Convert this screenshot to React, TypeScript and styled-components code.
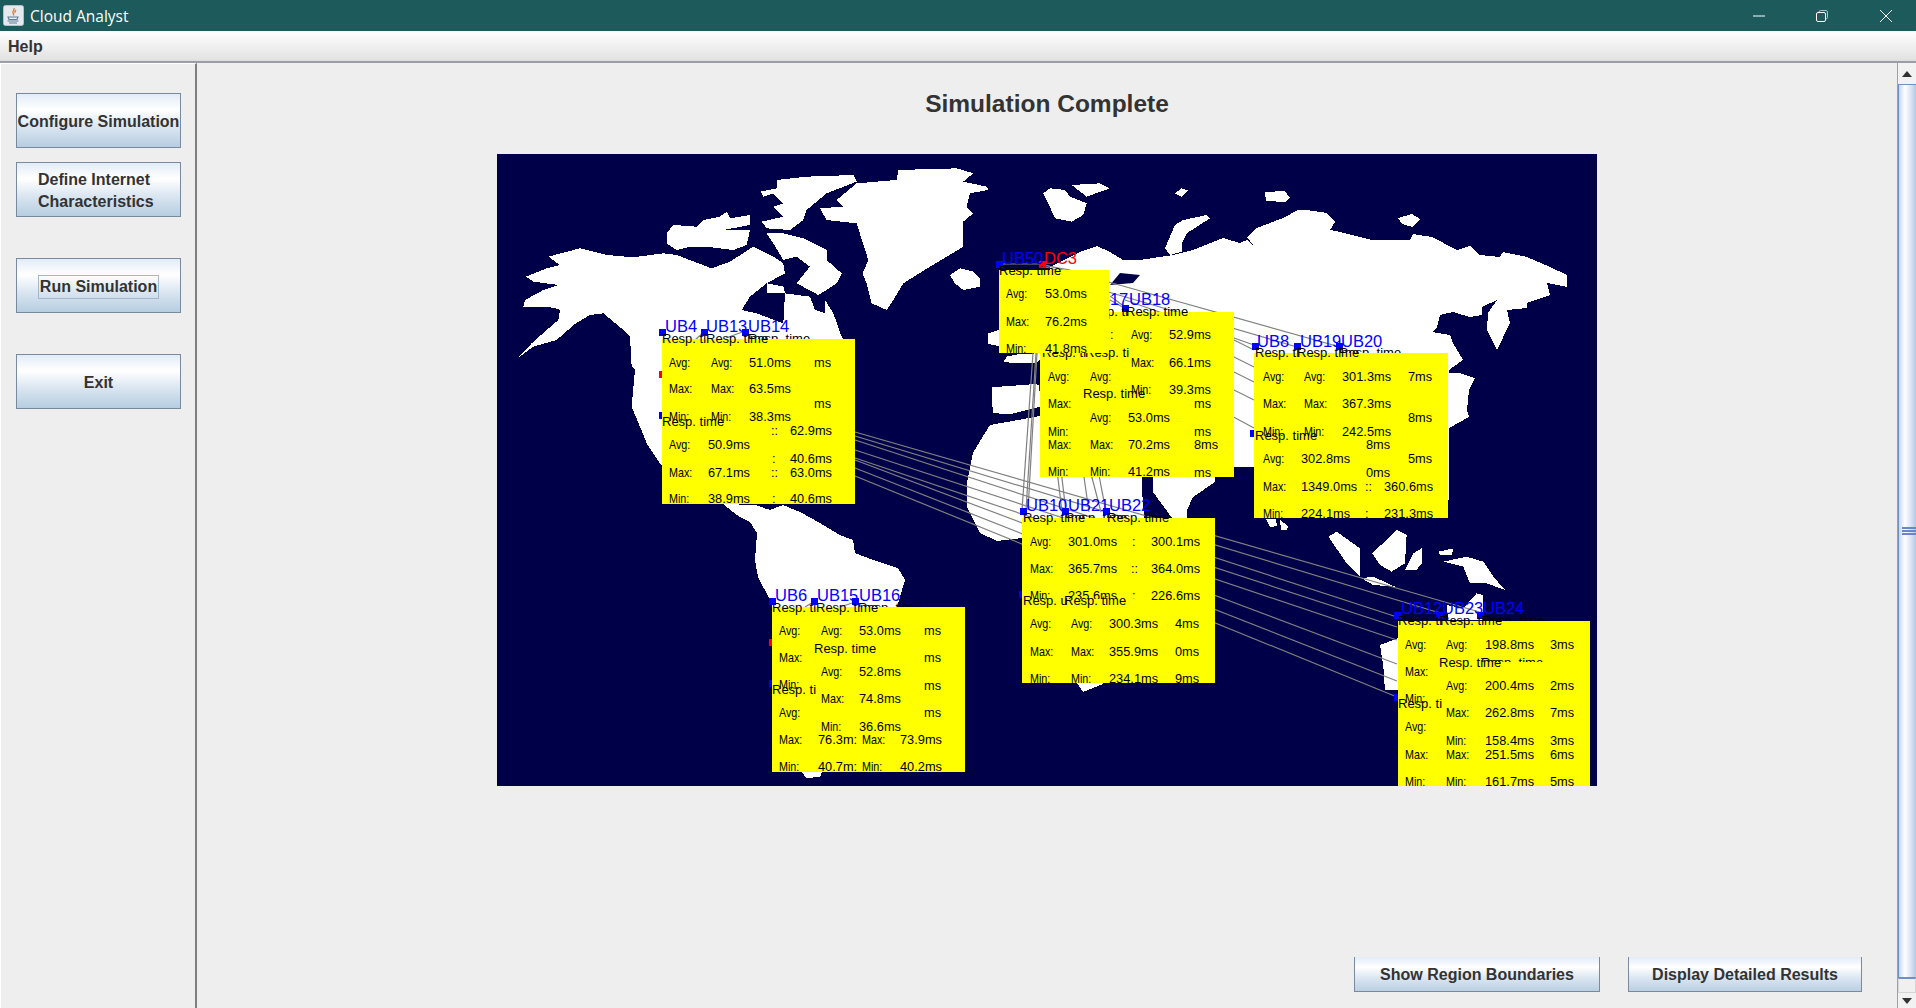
import React from "react";
import styled, { createGlobalStyle } from "styled-components";

const MAP_X = 497;
const MAP_Y = 154;

const GlobalStyle = createGlobalStyle`
  html, body {
    margin: 0;
    padding: 0;
    height: 100%;
    overflow: hidden;
    background: #eeeeee;
    font-family: "Liberation Sans", Arial, sans-serif;
  }
`;

const Frame = styled.div`
  width: 1916px;
  height: 1008px;
  display: flex;
  flex-direction: column;
  overflow: hidden;
`;

const TitleBar = styled.div`
  height: 31px;
  flex: none;
  background: #1c5a5c;
  color: #ffffff;
  display: flex;
  align-items: center;
  padding-left: 3px;
  font-family: "Open Sans", "Noto Sans", sans-serif;
  font-size: 15.5px;
`;

const AppName = styled.span`
  margin-left: 6px;
  flex: 1;
`;

const WindowButton = styled.button`
  width: 12px;
  height: 12px;
  padding: 0;
  border: 0;
  background: none;
  margin-right: ${(p: { $gap: number }) => p.$gap}px;
  display: block;
`;

const MenuBar = styled.div`
  height: 30px;
  flex: none;
  box-sizing: border-box;
  padding: 2px 0 0 8px;
  background: linear-gradient(#ffffff, #e2e2e2);
  display: flex;
  align-items: center;
  font-size: 16px;
  font-weight: 700;
  color: #333333;
  border-bottom: 1px solid #dddddd;
`;

const Body = styled.div`
  flex: 1;
  display: flex;
  min-height: 0;
  border-top: 2px solid #9a9ea6;
`;

const SidePanel = styled.aside`
  width: 197px;
  flex: none;
  box-sizing: border-box;
  padding: 29px 0 0 15px;
  background: #eeeeee;
  border-left: 1px solid #ffffff;
  border-top: 1px solid #ffffff;
  border-right: 2px solid #808080;
  display: flex;
  flex-direction: column;
  align-items: flex-start;
`;

const MetalButton = styled.button<{ $top?: number; $left?: boolean }>`
  width: 165px;
  height: 55px;
  flex: none;
  margin: ${(p) => p.$top ?? 0}px 0 0 0;
  padding: 2px 0 0 ${(p) => (p.$left ? "21px" : "0")};
  box-sizing: border-box;
  border: 1px solid #7a8a9e;
  background: linear-gradient(#e2ecf7 0%, #ffffff 30%, #dbe6f1 62%, #b6cde1 100%);
  color: #333333;
  font-family: "Liberation Sans", Arial, sans-serif;
  font-size: 16px;
  font-weight: 700;
  line-height: 22px;
  white-space: nowrap;
  overflow: hidden;
  text-align: ${(p) => (p.$left ? "left" : "center")};
`;

const FocusLabel = styled.span`
  display: inline-block;
  border: 1px solid #a3b8cc;
  padding: 0 1px;
  line-height: 22px;
`;

const Content = styled.main`
  flex: 1;
  display: flex;
  flex-direction: column;
  align-items: center;
  min-width: 0;
`;

const Heading = styled.h1`
  margin: 0;
  padding-top: 27px;
  height: 91px;
  box-sizing: border-box;
  line-height: 28px;
  font-size: 24.5px;
  font-weight: 700;
  color: #333333;
  text-align: center;
  flex: none;
`;

const MapCanvas = styled.div`
  position: relative;
  width: 1100px;
  height: 632px;
  flex: none;
  background: #000048;
  overflow: hidden;
`;

const MapDrawing = styled.svg`
  position: absolute;
  inset: 0;
  display: block;
`;

const Pin = styled.span<{ $x: number; $y: number; $c: string }>`
  position: absolute;
  left: ${(p) => p.$x - MAP_X}px;
  top: ${(p) => p.$y - MAP_Y}px;
  width: 7px;
  height: 7px;
  background: ${(p) => p.$c};
`;

const PinLabel = styled.span<{ $x: number; $y: number; $c: string }>`
  position: absolute;
  left: ${(p) => p.$x - MAP_X}px;
  top: ${(p) => p.$y - MAP_Y - 10}px;
  line-height: 20px;
  font-size: 16.5px;
  color: ${(p) => p.$c};
  white-space: nowrap;
`;

const Sheet = styled.div<{ $x: number; $y: number; $w: number; $h: number }>`
  position: absolute;
  left: ${(p) => p.$x - MAP_X}px;
  top: ${(p) => p.$y - MAP_Y}px;
  width: ${(p) => p.$w}px;
  height: ${(p) => p.$h}px;
  background: #ffff00;
  overflow: hidden;
`;

const Stat = styled.span<{ $x: number; $y: number; $label: boolean; $clip?: number }>`
  position: absolute;
  left: ${(p) => p.$x}px;
  top: ${(p) => p.$y - 7}px;
  line-height: 14px;
  height: ${(p) => (p.$clip ? `${p.$clip}px` : "14px")};
  overflow: hidden;
  font-size: 12.8px;
  transform: ${(p) => (p.$label ? "scaleX(0.84)" : "none")};
  transform-origin: left center;
  color: #000000;
  white-space: nowrap;
`;

const CardTitle = styled.span<{ $x: number; $y: number; $clip?: number }>`
  position: absolute;
  left: ${(p) => p.$x - MAP_X}px;
  top: ${(p) => p.$y - MAP_Y - 8}px;
  line-height: 16px;
  height: ${(p) => (p.$clip ? `${p.$clip}px` : "16px")};
  overflow: hidden;
  font-size: 13px;
  color: #000000;
  white-space: nowrap;
`;

const BottomBar = styled.div`
  margin-top: auto;
  align-self: stretch;
  display: flex;
  justify-content: flex-end;
  gap: 28px;
  padding: 0 35px 16px 0;
`;

const FooterButton = styled.button<{ $w: number }>`
  width: ${(p) => p.$w}px;
  height: 35px;
  padding: 2px 0 0 0;
  box-sizing: border-box;
  border: 1px solid #7a8a9e;
  border-top: 0;
  background: linear-gradient(#e2ecf7 0%, #ffffff 30%, #dbe6f1 62%, #b9cfe3 100%);
  color: #333333;
  font-family: "Liberation Sans", Arial, sans-serif;
  font-size: 16px;
  font-weight: 700;
`;

const ScrollBar = styled.div`
  width: 19px;
  flex: none;
  display: flex;
  flex-direction: column;
  box-sizing: border-box;
  border-left: 1px solid #a0a0a0;
  background: #f0f0f0;
`;

const ScrollArrow = styled.div<{ $h: number }>`
  height: ${(p) => p.$h}px;
  flex: none;
  display: flex;
  align-items: center;
  justify-content: center;
  background: #f2f2f2;
`;

const ScrollThumb = styled.div`
  flex: 1;
  display: flex;
  flex-direction: column;
  align-items: flex-end;
  justify-content: center;
  gap: 1px;
  border: 1px solid #6f8fc9;
  border-right: 0;
  background: linear-gradient(90deg, #c5d7ee, #ffffff 35%, #d8e4f3 70%, #b3c9e4);
`;

const Grip = styled.i`
  display: block;
  width: 14px;
  height: 2px;
  background: #6a86c8;
`;

const ScrollTrack = styled.div`
  height: 15px;
  flex: none;
  border: 1px solid #d5d5d5;
  border-top: 1px solid #6f8fc9;
  box-sizing: border-box;
`;

type Txt = [string, number, number, number?];

type Group = {
  pins: [number, number, string][];
  labels: [string, number, number, string][];
  rect: [number, number, number, number];
  under: Txt[];
  body: Txt[];
};

const BLUE = "#0000ff";
const RED = "#ff0000";

const europe: Group = {
  pins: [
    [1039, 384, BLUE],
    [1080, 305, BLUE],
    [1122, 305, BLUE],
  ],
  labels: [
    ["UB17", 1087, 299, BLUE],
    ["UB18", 1129, 299, BLUE],
  ],
  rect: [1040, 312, 194, 165],
  under: [],
  body: [
    ["Resp. ti", 1084, 312],
    ["Resp. time", 1126, 312],
    [":", 1110, 335],
    ["Avg:", 1131, 335],
    ["52.9ms", 1169, 335],
    ["Resp. ti", 1042, 353],
    ["Resp. ti", 1085, 353],
    ["Max:", 1131, 363],
    ["66.1ms", 1169, 363],
    ["Avg:", 1048, 377],
    ["Avg:", 1090, 377],
    ["Min:", 1131, 390],
    ["39.3ms", 1169, 390],
    ["Resp. time", 1083, 394],
    ["Max:", 1048, 404],
    ["ms", 1194, 404],
    ["Avg:", 1090, 418],
    ["53.0ms", 1128, 418],
    ["Min:", 1048, 432],
    ["ms", 1194, 432],
    ["Max:", 1048, 445],
    ["Max:", 1090, 445],
    ["70.2ms", 1128, 445],
    ["8ms", 1194, 445],
    ["Min:", 1048, 472],
    ["Min:", 1090, 472],
    ["41.2ms", 1128, 472],
    ["ms", 1194, 473],
  ],
};

const dc3: Group = {
  pins: [
    [996, 261, BLUE],
    [1039, 261, RED],
  ],
  labels: [
    ["UB50", 1002, 258, BLUE],
    ["DC3", 1044, 258, RED],
  ],
  rect: [999, 270, 110, 83],
  under: [],
  body: [
    ["Resp. time", 999, 271],
    ["Avg:", 1006, 294],
    ["53.0ms", 1045, 294],
    ["Max:", 1006, 322],
    ["76.2ms", 1045, 322],
    ["Min:", 1006, 349],
    ["41.8ms", 1045, 349],
  ],
};

const northAmerica: Group = {
  pins: [
    [659, 329, BLUE],
    [701, 329, BLUE],
    [742, 329, BLUE],
    [659, 371, RED],
    [659, 412, BLUE],
  ],
  labels: [
    ["UB4", 665, 326, BLUE],
    ["UB13", 706, 326, BLUE],
    ["UB14", 748, 326, BLUE],
  ],
  rect: [662, 339, 193, 165],
  under: [["Resp. time", 748, 339]],
  body: [
    ["Resp. ti", 662, 339],
    ["Resp. time", 706, 339],
    ["Avg:", 669, 363],
    ["Avg:", 711, 363],
    ["51.0ms", 749, 363],
    ["ms", 814, 363],
    ["Max:", 669, 389],
    ["Max:", 711, 389],
    ["63.5ms", 749, 389],
    ["ms", 814, 404],
    ["Min:", 669, 417],
    ["Min:", 711, 417],
    ["38.3ms", 749, 417],
    ["Resp. time", 662, 422],
    ["::", 771, 431],
    ["62.9ms", 790, 431],
    ["Avg:", 669, 445],
    ["50.9ms", 708, 445],
    [":", 772, 459],
    ["40.6ms", 790, 459],
    ["Max:", 669, 473],
    ["67.1ms", 708, 473],
    ["::", 771, 473],
    ["63.0ms", 790, 473],
    ["Min:", 669, 499],
    ["38.9ms", 708, 499],
    [":", 772, 499],
    ["40.6ms", 790, 499],
  ],
};

const asia: Group = {
  pins: [
    [1252, 343, BLUE],
    [1294, 343, BLUE],
    [1336, 343, BLUE],
    [1250, 430, BLUE],
  ],
  labels: [
    ["UB8", 1257, 341, BLUE],
    ["UB19", 1300, 341, BLUE],
    ["UB20", 1341, 341, BLUE],
  ],
  rect: [1254, 353, 194, 165],
  under: [["Resp. time", 1339, 353]],
  body: [
    ["Resp. ti", 1255, 353],
    ["Resp. time", 1297, 353],
    ["Avg:", 1263, 377],
    ["Avg:", 1304, 377],
    ["301.3ms", 1342, 377],
    ["7ms", 1408, 377],
    ["Max:", 1263, 404],
    ["Max:", 1304, 404],
    ["367.3ms", 1342, 404],
    ["8ms", 1408, 418],
    ["Min:", 1263, 432],
    ["Min:", 1304, 432],
    ["242.5ms", 1342, 432],
    ["Resp. time", 1255, 436],
    ["8ms", 1366, 445],
    ["Avg:", 1263, 459],
    ["302.8ms", 1301, 459],
    ["5ms", 1408, 459],
    ["0ms", 1366, 473],
    ["Max:", 1263, 487],
    ["1349.0ms", 1301, 487],
    ["::", 1365, 487],
    ["360.6ms", 1384, 487],
    ["Min:", 1263, 514],
    ["224.1ms", 1301, 514],
    [":", 1365, 514],
    ["231.3ms", 1384, 514],
  ],
};

const southAmerica: Group = {
  pins: [
    [769, 598, BLUE],
    [811, 598, BLUE],
    [852, 598, BLUE],
    [769, 639, RED],
    [769, 680, BLUE],
  ],
  labels: [
    ["UB6", 775, 595, BLUE],
    ["UB15", 817, 595, BLUE],
    ["UB16", 859, 595, BLUE],
  ],
  rect: [772, 607, 193, 165],
  under: [["Resp. time", 858, 608]],
  body: [
    ["Resp. ti", 772, 608],
    ["Resp. time", 816, 608],
    ["Avg:", 779, 631],
    ["Avg:", 821, 631],
    ["53.0ms", 859, 631],
    ["ms", 924, 631],
    ["Resp. time", 814, 649],
    ["Max:", 779, 658],
    ["ms", 924, 658],
    ["Avg:", 821, 672],
    ["52.8ms", 859, 672],
    ["Min:", 779, 685],
    ["ms", 924, 686],
    ["Resp. ti", 772, 690],
    ["Max:", 821, 699],
    ["74.8ms", 859, 699],
    ["Avg:", 779, 713],
    ["ms", 924, 713],
    ["Min:", 821, 727],
    ["36.6ms", 859, 727],
    ["Max:", 779, 740],
    ["76.3m:", 818, 740],
    ["Max:", 862, 740],
    ["73.9ms", 900, 740],
    ["Min:", 779, 767],
    ["40.7m:", 818, 767],
    ["Min:", 862, 767],
    ["40.2ms", 900, 767],
  ],
};

const africa: Group = {
  pins: [
    [1020, 508, BLUE],
    [1062, 508, BLUE],
    [1103, 508, BLUE],
    [1019, 591, BLUE],
  ],
  labels: [
    ["UB10", 1026, 505, BLUE],
    ["UB21", 1068, 505, BLUE],
    ["UB22", 1109, 505, BLUE],
  ],
  rect: [1022, 518, 193, 165],
  under: [["Resp. time", 1065, 518]],
  body: [
    ["Resp. time", 1023, 518],
    ["Resp. time", 1107, 518],
    ["Avg:", 1030, 542],
    ["301.0ms", 1068, 542],
    [":", 1132, 542],
    ["300.1ms", 1151, 542],
    ["Max:", 1030, 569],
    ["365.7ms", 1068, 569],
    ["::", 1131, 569],
    ["364.0ms", 1151, 569],
    ["Min:", 1030, 596, 10],
    ["235.6ms", 1068, 596, 10],
    [":", 1132, 596, 10],
    ["226.6ms", 1151, 596, 11],
    ["Resp. u", 1023, 601],
    ["Resp. time", 1064, 601],
    ["Avg:", 1030, 624],
    ["Avg:", 1071, 624],
    ["300.3ms", 1109, 624],
    ["4ms", 1175, 624],
    ["Max:", 1030, 652],
    ["Max:", 1071, 652],
    ["355.9ms", 1109, 652],
    ["0ms", 1175, 652],
    ["Min:", 1030, 679],
    ["Min:", 1071, 679],
    ["234.1ms", 1109, 679],
    ["9ms", 1175, 679],
  ],
};

const australia: Group = {
  pins: [
    [1394, 612, BLUE],
    [1436, 612, BLUE],
    [1477, 612, BLUE],
    [1394, 694, BLUE],
  ],
  labels: [
    ["UB12", 1401, 608, BLUE],
    ["UB23", 1442, 608, BLUE],
    ["UB24", 1483, 608, BLUE],
  ],
  rect: [1398, 621, 192, 165],
  under: [["Resp. time", 1482, 621]],
  body: [
    ["Resp. ti", 1398, 621],
    ["Resp. time", 1440, 621],
    ["Avg:", 1405, 645],
    ["Avg:", 1446, 645],
    ["198.8ms", 1485, 645],
    ["3ms", 1550, 645],
    ["Resp. time", 1439, 663],
    ["Resp. time", 1481, 663, 7],
    ["Max:", 1405, 672],
    ["Avg:", 1446, 686],
    ["200.4ms", 1485, 686],
    ["2ms", 1550, 686],
    ["Min:", 1405, 699],
    ["Resp. ti", 1398, 704],
    ["Max:", 1446, 713],
    ["262.8ms", 1485, 713],
    ["7ms", 1550, 713],
    ["Avg:", 1405, 727],
    ["Min:", 1446, 741],
    ["158.4ms", 1485, 741],
    ["3ms", 1550, 741],
    ["Max:", 1405, 755],
    ["Max:", 1446, 755],
    ["251.5ms", 1485, 755],
    ["6ms", 1550, 755],
    ["Min:", 1405, 782],
    ["Min:", 1446, 782],
    ["161.7ms", 1485, 782],
    ["5ms", 1550, 782],
  ],
};

// paint order matters, later cards sit on top of earlier ones
const groups = [europe, dc3, northAmerica, asia, southAmerica, africa, australia];

const lines: [number, number, number, number][] = [
  [855, 432, 1483, 613],
  [855, 436, 1440, 613],
  [855, 440, 1397, 617],
  [855, 450, 1397, 627],
  [855, 458, 1397, 640],
  [855, 460, 1397, 664],
  [855, 468, 1397, 681],
  [855, 476, 1397, 697],
  [1105, 281, 1340, 347],
  [1105, 291, 1297, 347],
  [1125, 300, 1254, 345],
  [1200, 323, 1254, 350],
  [1200, 340, 1254, 367],
  [1200, 355, 1254, 382],
  [1200, 373, 1254, 400],
  [1200, 399, 1254, 428],
  [1033, 353, 1022, 510],
  [1036, 353, 1026, 510],
  [1037, 353, 1028, 510],
  [1057, 470, 1062, 512],
  [1061, 470, 1066, 512],
  [1083, 470, 1089, 512],
  [1090, 470, 1101, 512],
  [1098, 470, 1106, 512],
  [1000, 264, 1042, 264],
  [1042, 265, 1070, 270],
  [1042, 264, 1066, 271],
  [1042, 266, 1060, 271],
  [705, 331, 695, 340],
  [745, 331, 726, 338],
  [815, 601, 805, 607],
  [858, 601, 840, 607],
  [1125, 307, 1110, 296],
  [1128, 310, 1110, 300],
];

// outlines in page pixels
const pageLand = [
  "723,504 733,512 740,517 750,522 757,533 755,560 758,577 770,600 772,607 897,607 905,580 898,568 873,560 855,553 853,540 840,535 820,523 800,512 783,505 770,510 755,505",
  "802,772 822,772 820,777 806,778",
  "1040,416 1007,422 990,425 985,433 973,453 967,483 967,507 980,533 997,541 1022,538 1022,600 1077,683 1083,692 1103,684 1150,600 1142,490 1142,477 1040,477",
  "1153,477 1153,492 1172,518 1187,518 1187,510 1193,497 1215,482 1215,477",
  "1050,267 1080,252 1097,246 1110,252 1123,260 1140,260 1153,258 1173,255 1193,250 1223,238 1240,243 1247,240 1253,245 1247,237 1257,228 1283,218 1298,210 1306,210 1327,213 1335,222 1330,230 1340,232 1372,240 1410,240 1413,234 1432,237 1457,250 1470,246 1480,255 1500,257 1503,252 1527,257 1550,267 1567,275 1567,287 1547,283 1550,295 1527,303 1527,308 1507,310 1510,323 1497,350 1487,330 1488,313 1497,300 1482,307 1482,315 1470,317 1453,312 1440,315 1437,327 1432,332 1450,335 1453,343 1463,360 1449,370 1449,500 1254,500 1254,467 1234,467 1200,477 1040,477 1040,353",
  "1449,373 1459,373 1475,378 1469,390 1467,410 1469,417 1449,428",
  "1265,192 1285,191 1290,198 1285,202 1266,201",
  "1398,218 1412,214 1420,219 1413,227 1402,224",
  "1266,519 1276,519 1277,526 1270,527",
  "1280,520 1288,526 1287,530 1281,530",
];

const northAmericaLand = [
  "82,625 130,590 200,570 240,535 250,525 300,495 340,490 400,540 420,560 425,650 435,660 425,770 450,830 470,880 510,940 530,960 1095,960 1095,640 1055,560 1030,490 1005,450 1005,490 975,480 960,440 885,430 880,520 800,490 755,480 780,440 830,400 885,370 880,340 850,320 790,290 720,335 665,355 560,315 520,310 430,322 350,315 270,295 175,320 210,345 170,355 108,380 130,395 205,405 160,420 105,450 100,470 170,470 195,475 210,480 205,510 170,540 125,580",
  "1225,60 1400,55 1450,70 1420,95 1490,110 1495,120 1440,130 1430,170 1450,190 1420,215 1420,290 1320,350 1240,400 1210,450 1190,480 1145,460 1130,400 1118,370 1135,330 1100,220 1010,210 990,175 1060,170 1040,150 1100,100 1220,90",
  "1380,375 1410,355 1450,365 1470,385 1470,410 1420,420 1395,400",
  "830,250 880,250 940,265 1010,300 1010,330 1055,370 1040,400 1010,420 985,435 920,400 960,350 920,320 880,330 850,280",
  "812,125 860,115 860,90 950,80 1090,75 1100,95 1010,130 950,180 940,210 900,240 830,235 815,215 880,200 850,170 880,160 850,130 820,140",
  "530,250 550,225 620,230 640,210 690,200 710,185 720,205 780,195 780,225 700,240 780,240 770,285 730,300 650,290 600,290 560,300 530,280",
  "830,400 880,410 885,430 830,430",
];

const europeLand = [
  "310,100 330,85 375,90 390,110 440,130 430,165 395,185 345,175 325,130",
  "395,75 480,70 510,85 440,110",
  "705,100 725,85 745,92 725,110",
  "800,165 810,175 740,220 725,250 725,275 690,285 675,265 705,195 730,180",
  "145,520 177,510 177,558 145,552",
  "190,607 200,590 240,582 300,580 300,600 285,610",
  "155,682 290,672 300,680 300,740 215,762 160,760 155,720",
];

const oceaniaLand = [
  "410,35 480,85 480,170 440,130 385,50",
  "517,100 590,30 620,45 615,130 575,155 540,135",
  "640,100 665,85 665,130 650,150 615,150",
  "715,95 760,85 755,105 720,105",
  "730,125 800,110 850,125 880,170 915,210 860,190 810,190 790,140",
  "485,175 520,170 585,200 520,195",
  "830,220 850,225 850,300 745,300 740,255 790,265",
  "540,375 594,355 594,510 555,510 550,440",
];

const Popup = ({ group }: { group: Group }) => {
  const [rx, ry, rw, rh] = group.rect;
  const isTitle = (t: Txt) => t[0].startsWith("Resp");
  return (
    <>
      {group.pins.map(([x, y, c], i) => (
        <Pin key={`p${i}`} $x={x} $y={y} $c={c} />
      ))}
      {group.labels.map(([t, x, y, c]) => (
        <PinLabel key={t} $x={x} $y={y} $c={c}>
          {t}
        </PinLabel>
      ))}
      {group.under.map(([t, x, y], i) => (
        <CardTitle key={`u${i}`} $x={x} $y={y}>
          {t}
        </CardTitle>
      ))}
      <Sheet $x={rx} $y={ry} $w={rw} $h={rh}>
        {group.body
          .filter((t) => !isTitle(t))
          .map(([t, x, y, clip], i) => (
            <Stat key={i} $x={x - rx} $y={y - ry} $label={/^[AM]/.test(t)} $clip={clip}>
              {t}
            </Stat>
          ))}
      </Sheet>
      {group.body.filter(isTitle).map(([t, x, y, clip], i) => (
        <CardTitle key={`t${i}`} $x={x} $y={y} $clip={clip}>
          {t}
        </CardTitle>
      ))}
    </>
  );
};

const WorldMap = () => (
  <MapCanvas>
    <MapDrawing width="1100" height="632" viewBox={`${MAP_X} ${MAP_Y} 1100 632`}>
      <g fill="#ffffff" shapeRendering="crispEdges">
        {pageLand.map((p) => (
          <polygon key={p} points={p} />
        ))}
        <g transform="translate(490 150) scale(0.3333)">
          {northAmericaLand.map((p) => (
            <polygon key={p} points={p} />
          ))}
        </g>
        <g transform="translate(940 160) scale(0.3333)">
          {europeLand.map((p) => (
            <polygon key={p} points={p} />
          ))}
        </g>
        <g transform="translate(1200 520) scale(0.3333)">
          {oceaniaLand.map((p) => (
            <polygon key={p} points={p} />
          ))}
        </g>
      </g>
      <polygon points="1120,273 1140,275 1133,283 1110,285" fill="#000048" />
      <g stroke="#808080" strokeWidth="1.2">
        {lines.map(([x1, y1, x2, y2]) => (
          <line key={`${x1}-${y1}-${x2}`} x1={x1} y1={y1} x2={x2} y2={y2} />
        ))}
      </g>
    </MapDrawing>
    {groups.map((g, i) => (
      <Popup key={i} group={g} />
    ))}
  </MapCanvas>
);

const JavaIcon = () => (
  <svg width="21" height="21" viewBox="0 0 21 21">
    <rect x="0.5" y="0.5" width="20" height="20" rx="2" fill="#e6e9ee" stroke="#b9bfc8" />
    <path d="M11 3c1 2-2 3-1 5 .5 1 1 1.5 .5 2.5M13 5c-1 1-1.5 2-1 3" fill="none" stroke="#d9772b" strokeWidth="1.3" />
    <path d="M5 12h10l-1 2.5H6zM4.500 16h11M6 18h8" fill="none" stroke="#5f7f9c" strokeWidth="1.1" />
  </svg>
);

const App = () => (
  <Frame>
    <GlobalStyle />
    <TitleBar>
      <JavaIcon />
      <AppName>Cloud Analyst</AppName>
      <WindowButton $gap={51} aria-label="minimize">
        <svg width="12" height="12" viewBox="0 0 12 12">
          <path d="M0 6h12" stroke="#fff" />
        </svg>
      </WindowButton>
      <WindowButton $gap={52} aria-label="restore">
        <svg width="12" height="12" viewBox="0 0 12 12">
          <path d="M3 2.500V2a1.500 1.500 0 0 1 1.500-1.500H10A1.500 1.500 0 0 1 11.500 2v5.500A1.500 1.500 0 0 1 10 9h-.5" fill="none" stroke="#a9c4c5" />
          <rect x="0.5" y="2.500" width="9" height="9" rx="1.500" fill="none" stroke="#fff" />
        </svg>
      </WindowButton>
      <WindowButton $gap={24} aria-label="close">
        <svg width="12" height="12" viewBox="0 0 12 12">
          <path d="M0 0l12 12M12 0L0 12" stroke="#fff" />
        </svg>
      </WindowButton>
    </TitleBar>
    <MenuBar>Help</MenuBar>
    <Body>
      <SidePanel>
        <MetalButton>Configure Simulation</MetalButton>
        <MetalButton $top={14} $left>
          Define Internet
          <br />
          Characteristics
        </MetalButton>
        <MetalButton $top={41}>
          <FocusLabel>Run Simulation</FocusLabel>
        </MetalButton>
        <MetalButton $top={41}>Exit</MetalButton>
      </SidePanel>
      <Content>
        <Heading>Simulation Complete</Heading>
        <WorldMap />
        <BottomBar>
          <FooterButton $w={246}>Show Region Boundaries</FooterButton>
          <FooterButton $w={234}>Display Detailed Results</FooterButton>
        </BottomBar>
      </Content>
      <ScrollBar>
        <ScrollArrow $h={21}>
          <svg width="10" height="6" viewBox="0 0 10 6">
            <path d="M5 0l5 6H0z" fill="#333" />
          </svg>
        </ScrollArrow>
        <ScrollThumb>
          <Grip />
          <Grip />
          <Grip />
        </ScrollThumb>
        <ScrollTrack />
        <ScrollArrow $h={15}>
          <svg width="10" height="6" viewBox="0 0 10 6">
            <path d="M5 6L0 0h10z" fill="#333" />
          </svg>
        </ScrollArrow>
      </ScrollBar>
    </Body>
  </Frame>
);

export default App;
